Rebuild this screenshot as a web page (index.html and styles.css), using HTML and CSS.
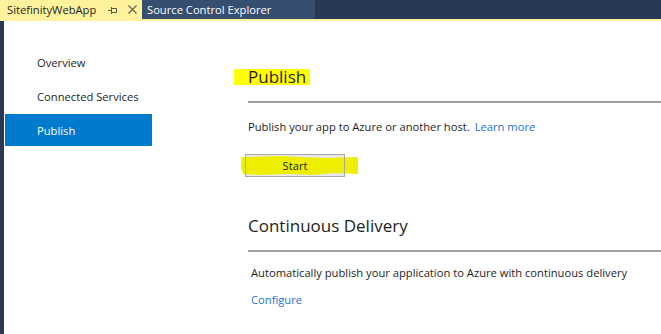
FILE: index.html
```html
<!DOCTYPE html>
<html>

<head>
    <meta charset="utf-8" />
    <title>SitefinityWebApp</title>
    <link rel="stylesheet" href="styles.css">
</head>

<body>
    <div class="tabBar">
        <div class="tab activeTab">
            <span class="tabTitle">SitefinityWebApp</span>
            <svg class="pinIcon" width="10" height="8" viewBox="0 0 10 8">
                <path d="M0 4.5H3M3.5 1V8M3.5 2.5H8.5V6.5H3.5M8.5 2.5V6.5" stroke="#5a5a50" stroke-width="1" fill="none" />
            </svg>
            <svg class="closeIcon" width="9" height="9" viewBox="0 0 9 9">
                <path d="M0.5 0.5L8.5 8.5M8.5 0.5L0.5 8.5" stroke="#6a6a60" stroke-width="1.4" fill="none" />
            </svg>
        </div>
        <div class="tab otherTab">Source Control Explorer</div>
    </div>
    <div class="tabLine"></div>

    <div class="main">
        <div class="edge"></div>
        <div class="sideNav">
            <div class="navItem">Overview</div>
            <div class="navItem">Connected Services</div>
            <div class="navItem selected">Publish</div>
        </div>
        <div class="content">
            <h2 class="pageTitle"><span class="marker">Publish</span></h2>
            <hr class="rule">
            <p class="intro">Publish your app to Azure or another host. <a class="link" href="#">Learn more</a></p>
            <div class="startWrap">
                <svg class="scribble" width="120" height="24" viewBox="0 0 120 24">
                    <path d="M2 3 L40 2 L60 3 L85 4 L118 3 L118 20 L95 19 L72 21 L50 20 L20 21 L3 20 L1 12 Z" fill="#eeee00" />
                </svg>
                <button class="startBtn">Start</button>
            </div>
            <h2 class="sectionTitle">Continuous Delivery</h2>
            <hr class="rule">
            <p class="desc">Automatically publish your application to Azure with continuous delivery</p>
            <a class="link configure" href="#">Configure</a>
        </div>
    </div>
</body>

</html>
```

FILE: styles.css
```css
* {
    box-sizing: border-box;
}

h2,
p,
body,
div {
    margin: 0px;
    padding: 0px;
}

body {
    font-family: "Open Sans", "Noto Sans", sans-serif;
    font-size: 11.2px;
    color: #1e1e1e;
    background-color: white;
    width: 661px;
    height: 334px;
    overflow: hidden;
}

.tabBar {
    display: flex;
    height: 19px;
    background-color: #293955;
}

.tab {
    display: flex;
    align-items: center;
    height: 19px;
}

.activeTab {
    width: 142px;
    padding-left: 7px;
    background-color: #fff29d;
    color: #1e1e1e;
}

.tabTitle {
    width: 101px;
}

.pinIcon {
    margin-right: 10px;
}

.otherTab {
    width: 173px;
    padding-left: 5px;
    background-color: #364e6f;
    color: white;
}

.tabLine {
    height: 2px;
    background-color: #fff29d;
}

.main {
    display: flex;
    height: 313px;
}

.edge {
    width: 4px;
    background-color: #293955;
}

.sideNav {
    width: 148px;
    padding-top: 25px;
    padding-left: 1px;
}

.navItem {
    height: 34px;
    line-height: 34px;
    padding-left: 32px;
}

.selected {
    height: 32px;
    line-height: 33px;
    background-color: #007acc;
    color: white;
}

.content {
    flex: 1;
    padding-left: 96px;
    padding-top: 48px;
}

.pageTitle {
    font-size: 17px;
    font-weight: normal;
    line-height: 16px;
    height: 16px;
    margin-left: -14px;
}

.marker {
    display: inline-block;
    height: 16px;
    line-height: 16px;
    background-color: #ffff00;
    padding: 0px 4px 0px 14px;
}

.rule {
    border: none;
    border-top: 2px solid #a0a0a0;
    margin: 0px;
    height: 0px;
}

.pageTitle + .rule {
    margin-top: 16px;
}

.intro {
    margin-top: 15px;
    line-height: 18px;
}

.link {
    color: #1e6fd9;
    text-decoration: none;
    margin-left: 2px;
}

.startWrap {
    position: relative;
    margin-top: 18px;
    margin-left: -3px;
    width: 100px;
    height: 23px;
    background-color: #e9e9ed;
}

.startBtn {
    position: relative;
    width: 100px;
    height: 23px;
    font-family: "Open Sans", "Noto Sans", sans-serif;
    font-size: 11.2px;
    color: #1e1e1e;
    background-color: transparent;
    border: 1px solid #a7a7a7;
    padding: 0px;
}

.scribble {
    position: absolute;
    left: -5px;
    top: 0px;
}

.sectionTitle {
    font-size: 17px;
    font-weight: normal;
    line-height: 24px;
    margin-top: 37px;
}

.sectionTitle + .rule {
    margin-top: 12px;
}

.desc {
    margin-top: 12px;
    padding-left: 3px;
    line-height: 18px;
}

.configure {
    display: block;
    margin-top: 9px;
    margin-left: 0px;
    padding-left: 3px;
    line-height: 18px;
}
```
